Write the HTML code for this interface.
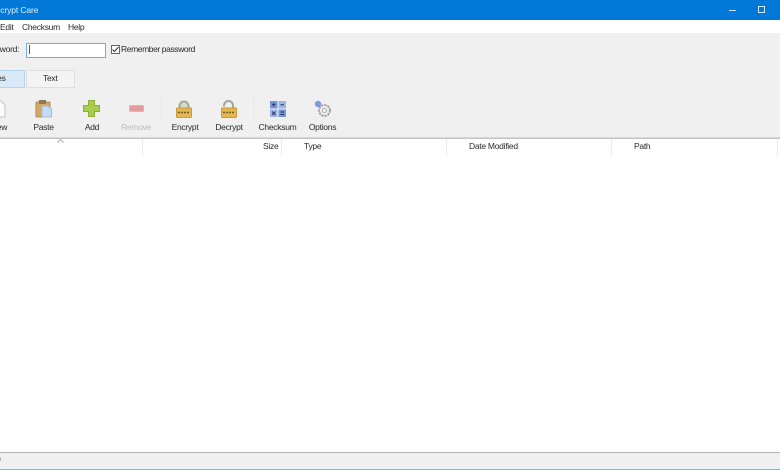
<!DOCTYPE html>
<html><head><meta charset="utf-8"><style>
html,body{margin:0;padding:0;background:#fff}
#r{position:relative;width:780px;height:470px;overflow:hidden;background:#fff;font-family:"Liberation Sans",sans-serif;font-size:8.5px;color:#2b2b2b;letter-spacing:-.28px;filter:blur(.3px)}
#r div,#r svg{position:absolute}
.t{white-space:nowrap;line-height:11px}
.c{white-space:nowrap;line-height:11px;text-align:center;width:60px}
.s{width:1px;background:#ececec;top:139px;height:17px}
</style></head><body><div id="r">
<div style="left:0;top:0;width:780px;height:20px;background:#0078d7"></div>
<div class="t" style="left:-10px;top:5px;color:#e4f1fb;font-size:8.5px;letter-spacing:-.1px">Encrypt Care</div>
<div style="left:729px;top:10px;width:7px;height:1px;background:#cfe6f8"></div>
<div style="left:758px;top:6px;width:5px;height:5px;border:1px solid #d6eafa"></div>
<div style="left:0;top:20px;width:780px;height:13px;background:#fff"></div>
<div class="t" style="left:0;top:22px">Edit</div>
<div class="t" style="left:22px;top:22px">Checksum</div>
<div class="t" style="left:68px;top:22px">Help</div>
<div style="left:0;top:33px;width:780px;height:105px;background:#f0f0f0"></div>
<div class="t" style="left:-18px;top:44px">Password:</div>
<div style="left:26px;top:43px;width:78px;height:13px;border:1px solid #6fabdb;background:#fff"></div>
<div style="left:29px;top:45px;width:1px;height:9px;background:#555"></div>
<div style="left:111px;top:45px;width:7px;height:7px;border:1px solid #666;background:#fff"></div>
<svg style="left:111px;top:45px" width="9" height="9"><path d="M1.5 4.5 L3.5 6.5 L7.5 2" fill="none" stroke="#333" stroke-width="1"/></svg>
<div class="t" style="left:121px;top:44px;letter-spacing:-.4px">Remember password</div>
<div style="left:-10px;top:70px;width:33px;height:16px;background:#d9e9f7;border:1px solid #b5d5ef"></div>
<div class="t" style="left:-11px;top:73px">Files</div>
<div style="left:26px;top:70px;width:47px;height:16px;background:#f4f4f4;border:1px solid #dfdfdf"></div>
<div class="t" style="left:43px;top:73px">Text</div>

<svg style="left:-8px;top:100px" width="14" height="18"><path d="M1 1H9L13 5V17H1Z" fill="#fbfbfb" stroke="#c4c4c4"/></svg>
<div class="c" style="left:-31px;top:122px">New</div>

<svg style="left:35px;top:100px" width="18" height="18"><rect x="1" y="2" width="14" height="15" rx="1" fill="#d6a868" stroke="#b08a52"/><rect x="4" y="0" width="7" height="4" fill="#8f7a58"/><path d="M7 6H13L16.5 9V17H7Z" fill="#c5dcf3" stroke="#9dbcdc"/></svg>
<div class="c" style="left:13.5px;top:122px">Paste</div>

<svg style="left:83px;top:100px" width="17" height="17"><path d="M5.5 .5H11.5V5.5H16.5V11.5H11.5V16.5H5.5V11.5H.5V5.5H5.5Z" fill="#a9cd4e" stroke="#8fae3c"/></svg>
<div class="c" style="left:62px;top:122px">Add</div>

<svg style="left:129px;top:105px" width="15" height="8"><rect x=".5" y=".5" width="14" height="6" rx="1" fill="#e39b9d" stroke="#dcb5b5"/></svg>
<div class="c" style="left:106px;top:122px;color:#bcbcbc">Remove</div>

<div style="left:161px;top:97px;width:1px;height:26px;background:#e8e8e8"></div>

<svg style="left:176px;top:100px" width="16" height="18"><path d="M3.5 9V6a4.5 4.5 0 0 1 9 0V9" fill="#d8d8cc" stroke="#a5a598" stroke-width="2"/><rect x=".5" y="8" width="15" height="9.5" rx="1" fill="#e6b650" stroke="#c79a3a"/><path d="M2 12.5H14" stroke="#6b5a26" stroke-width="1.6" stroke-dasharray="2 1"/></svg>
<div class="c" style="left:155px;top:122px">Encrypt</div>

<svg style="left:221px;top:100px" width="16" height="18"><path d="M3 6.5V5.5a4.5 4.5 0 0 1 9 0V9" fill="none" stroke="#a5a598" stroke-width="2"/><rect x=".5" y="8" width="15" height="9.5" rx="1" fill="#e6b650" stroke="#c79a3a"/><path d="M2 12.5H14" stroke="#6b5a26" stroke-width="1.6" stroke-dasharray="2 1"/></svg>
<div class="c" style="left:199px;top:122px">Decrypt</div>

<div style="left:253px;top:97px;width:1px;height:26px;background:#e8e8e8"></div>

<svg style="left:270px;top:101px" width="16" height="16"><rect x="0" y="0" width="7.5" height="7.5" fill="#7597da"/><rect x="8.5" y="0" width="7.5" height="7.5" fill="#9db6e6"/><rect x="0" y="8.5" width="7.5" height="7.5" fill="#9db6e6"/><rect x="8.5" y="8.5" width="7.5" height="7.5" fill="#7597da"/><path d="M2 3.7H5.5M3.7 2V5.5M10.5 3.7H14M2 10.5L5.5 14M5.5 10.5L2 14M10.5 11H14M10.5 13.5H14" stroke="#26365c" stroke-width="1"/></svg>
<div class="c" style="left:247.5px;top:122px">Checksum</div>

<svg style="left:314px;top:100px" width="18" height="18"><circle cx="10.5" cy="10.5" r="5.5" fill="#ececec" stroke="#9a9a9a" stroke-width="1.8" stroke-dasharray="2.2 1"/><circle cx="10.5" cy="10.5" r="2" fill="#fafafa" stroke="#aaa"/><circle cx="4" cy="4" r="3.2" fill="#7a9cdc"/></svg>
<div class="c" style="left:292.5px;top:122px">Options</div>

<div style="left:0;top:137px;width:780px;height:1px;background:#d8d8d8"></div>
<div style="left:0;top:138px;width:780px;height:1px;background:#c4c4c4"></div>
<svg style="left:57px;top:139px" width="7" height="4"><path d="M.5 3.5L3.5 .5L6.5 3.5" fill="none" stroke="#aaa"/></svg>
<div class="t" style="left:-23px;top:141px">Name</div>
<div class="t" style="left:263px;top:141px">Size</div>
<div class="t" style="left:304px;top:141px">Type</div>
<div class="t" style="left:469px;top:141px">Date Modified</div>
<div class="t" style="left:634px;top:141px">Path</div>
<div class="s" style="left:142px"></div>
<div class="s" style="left:281px"></div>
<div class="s" style="left:446px"></div>
<div class="s" style="left:611px"></div>
<div class="s" style="left:777px"></div>

<div style="left:0;top:452px;width:780px;height:1px;background:#b4b4b4"></div>
<div style="left:0;top:453px;width:780px;height:16px;background:#f0f0f0"></div>
<div style="left:0;top:469px;width:780px;height:1px;background:#6fbce8"></div>
<div class="t" style="left:-4px;top:454px">0</div>
</div></body></html>
